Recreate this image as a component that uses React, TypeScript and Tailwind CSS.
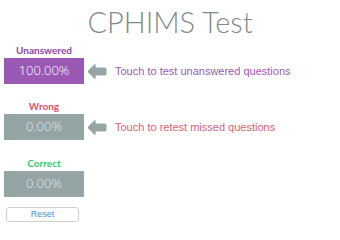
import React from "react";

function Arrow() {
  return (
    <svg width="20" height="17" viewBox="0 0 20 17" className="shrink-0">
      <path
        d="M1.2 7.6 L7.2 1.4 Q8.2 0.5 8.6 1.8 L8.6 4.4 L18 4.4 Q19.5 4.4 19.5 5.9 L19.5 11.1 Q19.5 12.6 18 12.6 L8.6 12.6 L8.6 15.2 Q8.2 16.5 7.2 15.6 L1.2 9.4 Q0.4 8.5 1.2 7.6 Z"
        fill="#95a5a6"
      />
    </svg>
  );
}

function Section({
  label,
  labelColor,
  value,
  boxColor,
  valueColor,
  hint,
  hintColor,
  top,
}: {
  label: string;
  labelColor: string;
  value: string;
  boxColor: string;
  valueColor: string;
  hint?: string;
  hintColor?: string;
  top: string;
}) {
  return (
    <div className={top}>
      <div
        className="w-[80px] h-[12px] leading-[12px] text-center text-[10px] font-bold"
        style={{ color: labelColor, fontFamily: "Lato, 'Open Sans', sans-serif" }}
      >
        {label}
      </div>
      <div className="flex items-center mt-[2px]">
        <div
          className="w-[80px] h-[26px] flex items-center justify-center text-[13px] font-light"
          style={{ backgroundColor: boxColor, color: valueColor, fontFamily: "'Open Sans', sans-serif" }}
        >
          {value}
        </div>
        {hint && (
          <>
            <div className="ml-[3px]">
              <Arrow />
            </div>
            <div
              className="ml-[8px] text-[11px] leading-[14px]"
              style={{ color: hintColor, fontFamily: "'Liberation Sans', Arial, sans-serif" }}
            >
              {hint}
            </div>
          </>
        )}
      </div>
    </div>
  );
}

export default function App() {
  return (
    <div className="w-[340px] h-[227px] bg-white overflow-hidden">
      <div
        className="h-[44px] pt-[2px] text-center text-[29px] leading-[40px] font-light text-[#7f8c8d]"
        style={{ fontFamily: "Lato, 'Open Sans', sans-serif" }}
      >
        CPHIMS Test
      </div>
      <div className="pl-[4px]">
        <Section
          top="mt-0"
          label="Unanswered"
          labelColor="#8e44ad"
          value="100.00%"
          boxColor="#9b59b6"
          valueColor="#ffffff"
          hint="Touch to test unanswered questions"
          hintColor="#9b59b6"
        />
        <Section
          top="mt-[16px]"
          label="Wrong"
          labelColor="#e0506a"
          value="0.00%"
          boxColor="#95a5a6"
          valueColor="#dfe6e6"
          hint="Touch to retest missed questions"
          hintColor="#d9607a"
        />
        <Section
          top="mt-[17px]"
          label="Correct"
          labelColor="#2ecc71"
          value="0.00%"
          boxColor="#95a5a6"
          valueColor="#dfe6e6"
        />
        <button
          className="mt-[10px] ml-[2px] w-[73px] h-[15px] border border-[#d0d0d0] rounded-[3px] bg-white text-[9px] leading-[13px] text-[#4a90e2]"
          style={{ fontFamily: "'Liberation Sans', Arial, sans-serif" }}
        >
          Reset
        </button>
      </div>
    </div>
  );
}
